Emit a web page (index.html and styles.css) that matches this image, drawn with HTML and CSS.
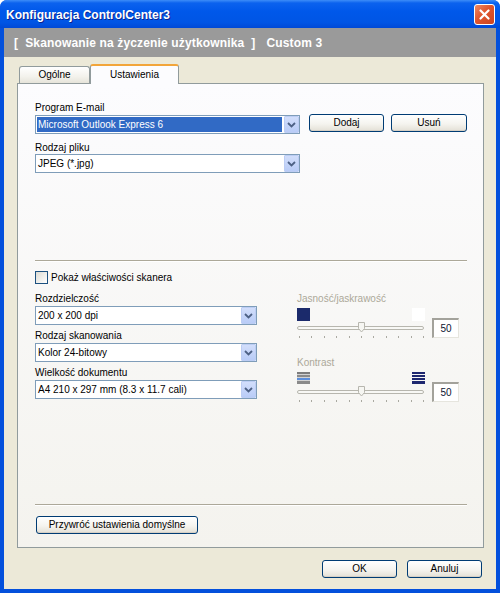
FILE: index.html
```html
<!DOCTYPE html>
<html lang="pl">
<head>
<meta charset="utf-8">
<title>Konfiguracja ControlCenter3</title>
<link rel="stylesheet" href="styles.css">
</head>
<body>
<div class="window">
  <div class="titlebar">
    <span class="title">Konfiguracja ControlCenter3</span>
    <div class="close">
      <svg width="11" height="11" viewBox="0 0 11 11"><path d="M1.5 1.5L9.5 9.5M9.5 1.5L1.5 9.5" stroke="#fff" stroke-width="2.2" stroke-linecap="round"/></svg>
    </div>
  </div>
  <div class="frame">
    <div class="header">
      <span>[</span><span class="h-name">Skanowanie na życzenie użytkownika</span><span class="h-close">]</span><span class="h-custom">Custom 3</span>
    </div>
    <div class="client">
      <div class="tabs">
        <div class="tab">Ogólne</div>
        <div class="tab active">Ustawienia</div>
      </div>
      <div class="panel">
        <div class="lbl">Program E-mail</div>
        <div class="row first">
          <div class="combo wide">
            <div class="combo-text sel">Microsoft Outlook Express 6</div>
            <div class="combo-btn"><svg width="9" height="6" viewBox="0 0 9 6"><path d="M1 1l3.5 3.5L8 1" fill="none" stroke="#4D6185" stroke-width="1.8"/></svg></div>
          </div>
          <div class="btn b-dodaj">Dodaj</div>
          <div class="btn b-usun">Usuń</div>
        </div>
        <div class="lbl gap7">Rodzaj pliku</div>
        <div class="combo wide">
          <div class="combo-text">JPEG (*.jpg)</div>
          <div class="combo-btn"><svg width="9" height="6" viewBox="0 0 9 6"><path d="M1 1l3.5 3.5L8 1" fill="none" stroke="#4D6185" stroke-width="1.8"/></svg></div>
        </div>

        <div class="sep sep1"></div>

        <div class="check-row">
          <div class="checkbox"></div>
          <span class="check-label">Pokaż właściwości skanera</span>
        </div>

        <div class="cols">
          <div class="col-left">
            <div class="lbl">Rozdzielczość</div>
            <div class="combo narrow s1">
              <div class="combo-text">200 x 200 dpi</div>
              <div class="combo-btn"><svg width="9" height="6" viewBox="0 0 9 6"><path d="M1 1l3.5 3.5L8 1" fill="none" stroke="#4D6185" stroke-width="1.8"/></svg></div>
            </div>
            <div class="lbl gap4">Rodzaj skanowania</div>
            <div class="combo narrow s1">
              <div class="combo-text">Kolor 24-bitowy</div>
              <div class="combo-btn"><svg width="9" height="6" viewBox="0 0 9 6"><path d="M1 1l3.5 3.5L8 1" fill="none" stroke="#4D6185" stroke-width="1.8"/></svg></div>
            </div>
            <div class="lbl gap4">Wielkość dokumentu</div>
            <div class="combo narrow s1">
              <div class="combo-text">A4 210 x 297 mm (8.3 x 11.7 cali)</div>
              <div class="combo-btn"><svg width="9" height="6" viewBox="0 0 9 6"><path d="M1 1l3.5 3.5L8 1" fill="none" stroke="#4D6185" stroke-width="1.8"/></svg></div>
            </div>
          </div>
          <div class="col-right">
            <div class="lbl disabled">Jasność/jaskrawość</div>
            <div class="slider-row">
              <svg class="slider" width="128" height="31" viewBox="0 0 128 31">
                <rect x="0" y="0" width="13" height="13" fill="#1B2A6B"/>
                <rect x="115" y="0" width="13" height="13" fill="#FFFFFF"/>
                <rect x="0.5" y="18.5" width="126" height="3" rx="1.5" fill="#F8F8F5" stroke="#B7B6AE"/>
                <path d="M61.5 14.5h6v6l-3 3.5l-3-3.5z" fill="#F6F6F2" stroke="#B7B6AE"/>
                <path d="M2.5 28v2M14.5 28v2M27.5 28v2M39.5 28v2M52.5 28v2M64.5 28v2M76.5 28v2M89.5 28v2M101.5 28v2M114.5 28v2M126.5 28v2" stroke="#AAA9A1"/>
              </svg>
              <div class="value">50</div>
            </div>
            <div class="lbl disabled gap17">Kontrast</div>
            <div class="slider-row">
              <svg class="slider" width="128" height="31" viewBox="0 0 128 31">
                <rect x="0" y="0" width="13" height="12" fill="#D2D2D2"/>
                <rect x="0" y="0" width="13" height="2" fill="#7C7C7C"/>
                <rect x="0" y="3" width="13" height="2" fill="#8A8A8A"/>
                <rect x="0" y="6" width="13" height="2" fill="#5C8EDB"/>
                <rect x="0" y="9" width="13" height="3" fill="#8A8A8A"/>
                <rect x="115" y="0" width="13" height="2" fill="#1E2870"/>
                <rect x="115" y="3" width="13" height="2" fill="#1E2870"/>
                <rect x="115" y="6" width="13" height="2" fill="#1E2870"/>
                <rect x="115" y="9" width="13" height="3" fill="#1E2870"/>
                <rect x="0.5" y="18.5" width="126" height="3" rx="1.5" fill="#F8F8F5" stroke="#B7B6AE"/>
                <path d="M61.5 14.5h6v6l-3 3.5l-3-3.5z" fill="#F6F6F2" stroke="#B7B6AE"/>
                <path d="M2.5 28v2M14.5 28v2M27.5 28v2M39.5 28v2M52.5 28v2M64.5 28v2M76.5 28v2M89.5 28v2M101.5 28v2M114.5 28v2M126.5 28v2" stroke="#AAA9A1"/>
              </svg>
              <div class="value">50</div>
            </div>
          </div>
        </div>

        <div class="bottom">
          <div class="sep"></div>
          <div class="btn b-restore">Przywróć ustawienia domyślne</div>
        </div>
      </div>
      <div class="footer">
        <div class="btn b-foot">OK</div>
        <div class="btn b-foot">Anuluj</div>
      </div>
    </div>
  </div>
</div>
</body>
</html>
```
FILE: styles.css
```css
html, body {
  margin: 0;
  padding: 0;
  background: #ffffff;
}
body {
  width: 500px;
  height: 593px;
  overflow: hidden;
  font-family: "Liberation Sans", Arial, sans-serif;
  font-size: 10px;
  color: #000;
}
.window {
  width: 500px;
  height: 593px;
  display: flex;
  flex-direction: column;
  background: #0252DF;
  border-radius: 7px 7px 0 0;
  overflow: hidden;
}
.titlebar {
  height: 28px;
  flex: none;
  display: flex;
  justify-content: space-between;
  align-items: center;
  padding: 0 5px 0 6px;
  background: linear-gradient(#3D8DF8 0, #0B62EE 3px, #0058EA 40%, #0055E5 80%, #0049D6 100%);
}
.title {
  color: #fff;
  font-weight: bold;
  font-size: 12px;
  text-shadow: 1px 1px 0 #0C2490;
  padding-top: 1px;
}
.close {
  width: 21px;
  height: 21px;
  box-sizing: border-box;
  border: 1px solid #ffffff;
  border-radius: 3px;
  background: linear-gradient(135deg, #F08A64 0, #E0552D 45%, #CC4420 100%);
  display: flex;
  align-items: center;
  justify-content: center;
  align-self: flex-start;
  margin-top: 4px;
}
.frame {
  flex: 1;
  display: flex;
  flex-direction: column;
  border: 4px solid #0350DC;
  border-top: 0;
}
.header {
  height: 29px;
  flex: none;
  background: #9A9A9A;
  color: #fff;
  font-weight: bold;
  font-size: 12px;
  display: flex;
  align-items: center;
  padding-left: 10px;
  letter-spacing: 0.15px;
}
.h-name { margin-left: 7px; }
.h-close { margin-left: 7px; }
.h-custom { margin-left: 11px; }
.client {
  flex: 1;
  background: #ECE9D8;
  display: flex;
  flex-direction: column;
  padding: 7px 12px 0 13px;
}
.tabs {
  display: flex;
  align-items: flex-end;
  height: 19px;
  padding-left: 2px;
  position: relative;
  z-index: 1;
}
.tab {
  width: 71px;
  height: 17px;
  box-sizing: border-box;
  border: 1px solid #919B9C;
  border-bottom: 0;
  border-radius: 3px 3px 0 0;
  background: linear-gradient(#FFFFFF, #F3F2EC 60%, #E6E4DA);
  text-align: center;
  line-height: 16px;
}
.tab.active {
  width: 89px;
  height: 20px;
  margin-bottom: -1px;
  border-top: 2px solid #F2A53A;
  background: #FCFCFE;
  line-height: 17px;
}
.panel {
  height: 465px;
  box-sizing: border-box;
  border: 1px solid #919B9C;
  background: linear-gradient(#FCFCFE, #F4F3EE);
  padding: 17px 16px 13px 17px;
  display: flex;
  flex-direction: column;
}
.lbl {
  height: 13px;
  line-height: 13px;
  white-space: nowrap;
}
.lbl.disabled { color: #ACA899; }
.gap7 { margin-top: 7px; }
.gap4 { margin-top: 4px; }
.gap17 { margin-top: 17px; }
.row {
  display: flex;
  align-items: flex-start;
}
.row.first { margin-top: 1px; }
.combo {
  height: 19px;
  box-sizing: border-box;
  border: 1px solid #7F9DB9;
  background: #fff;
  display: flex;
}
.combo.wide { width: 265px; }
.combo.narrow { width: 222px; }
.combo.s1 { margin-top: 1px; }
.combo-text {
  flex: 1;
  margin: 1px 2px 1px 1px;
  padding-left: 1px;
  line-height: 15px;
  white-space: nowrap;
  overflow: hidden;
}
.combo-text.sel {
  background: #316AC5;
  color: #fff;
}
.combo-btn {
  width: 15px;
  box-sizing: border-box;
  border: 1px solid #BCCDF4;
  border-radius: 1px;
  background: linear-gradient(#D2DEFB, #B9CCF7);
  display: flex;
  align-items: center;
  justify-content: center;
}
.btn {
  height: 18px;
  box-sizing: border-box;
  border: 1px solid #003C74;
  border-radius: 3px;
  background: linear-gradient(#FFFFFF, #F5F4EF 55%, #E3E0D6);
  box-shadow: inset 0 -1px 0 #D6D0C5;
  text-align: center;
  line-height: 16px;
  white-space: nowrap;
}
.b-dodaj {
  width: 75px;
  margin-left: 9px;
  margin-top: -1px;
}
.b-usun {
  width: 76px;
  margin-left: 7px;
  margin-top: -1px;
}
.sep {
  height: 0;
  border-top: 1px solid #ACA899;
  border-bottom: 1px solid #FFFFFF;
}
.sep1 { margin-top: 87px; }
.check-row {
  margin-top: 9px;
  height: 13px;
  display: flex;
  align-items: center;
}
.checkbox {
  width: 13px;
  height: 13px;
  box-sizing: border-box;
  border: 1px solid #1C5180;
  background: linear-gradient(135deg, #DCDBD3, #FFFFFF);
}
.check-label {
  margin-left: 3px;
  line-height: 13px;
}
.cols {
  margin-top: 8px;
  display: flex;
}
.col-left {
  width: 222px;
  display: flex;
  flex-direction: column;
}
.col-right {
  margin-left: 40px;
  display: flex;
  flex-direction: column;
}
.slider-row {
  margin-top: 3px;
  display: flex;
  align-items: flex-start;
}
.slider { display: block; }
.value {
  margin-left: 7px;
  margin-top: 10px;
  width: 27px;
  height: 20px;
  box-sizing: border-box;
  border-top: 2px solid #A3A29B;
  border-left: 2px solid #A3A29B;
  border-right: 1px solid #E6E5DE;
  border-bottom: 1px solid #E6E5DE;
  background: #fff;
  text-align: center;
  line-height: 17px;
  color: #0B1430;
}
.bottom {
  margin-top: auto;
  display: flex;
  flex-direction: column;
}
.b-restore {
  width: 162px;
  margin-top: 10px;
  margin-left: 1px;
}
.footer {
  display: flex;
  justify-content: flex-end;
  padding-top: 12px;
  padding-right: 2px;
}
.b-foot {
  width: 75px;
  margin-left: 10px;
}
```
